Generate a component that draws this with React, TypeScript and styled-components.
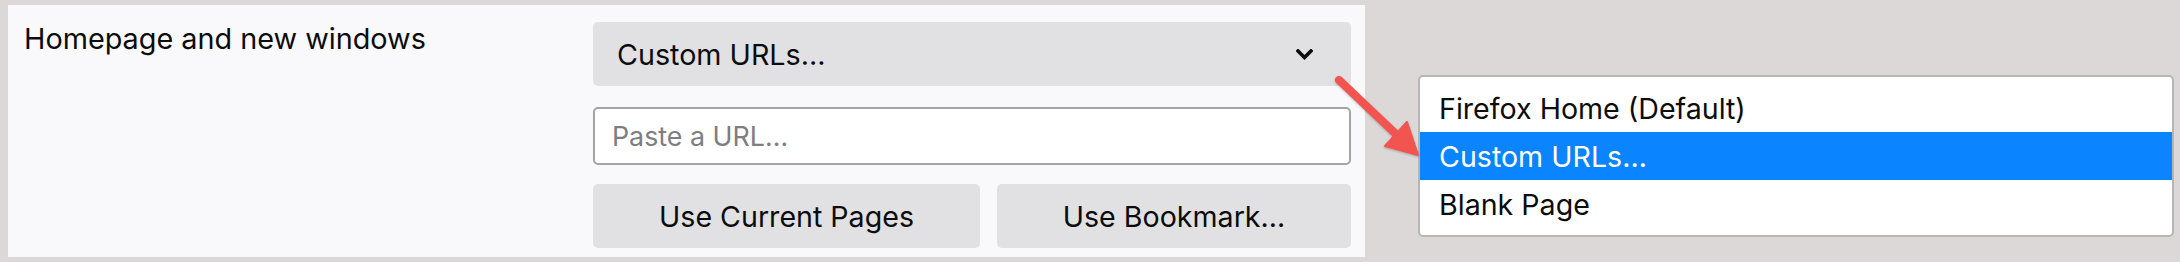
import React from "react";
import styled, { createGlobalStyle } from "styled-components";

const Global = createGlobalStyle`
  html, body { margin: 0; padding: 0; background: #dcd8d8; }
  body { font-family: Inter, "Liberation Sans", sans-serif; -webkit-font-smoothing: antialiased; }
  * { box-sizing: border-box; }
`;

const Stage = styled.div`
  position: relative;
  width: 2180px;
  height: 262px;
  display: flex;
  align-items: flex-start;
  padding: 5px 0 0 8px;
  background: #dcd8d8;
`;

const Panel = styled.section`
  width: 1357px;
  height: 252px;
  background: #f9f9fb;
  display: flex;
  padding: 17px 14px 9px 16px;
`;

const Label = styled.div`
  width: 569px;
  font-size: 28.8px;
  line-height: 36px;
  color: #0c0c0d;
  margin-top: -1px;
`;

const Controls = styled.div`
  width: 758px;
  display: flex;
  flex-direction: column;
`;

const Select = styled.div`
  height: 64px;
  border-radius: 5px;
  background: #e1e1e3;
  display: flex;
  align-items: center;
  justify-content: space-between;
  padding: 0 38px 0 24px;
  font-size: 28.7px;
  color: #0c0c0d;
`;

const UrlInput = styled.input`
  margin-top: 21px;
  height: 58px;
  border: 2px solid #a3a3a8;
  border-radius: 5px;
  background: #fff;
  padding: 0 17px;
  font-family: inherit;
  font-size: 26.8px;
  color: #0c0c0d;
  outline: none;
  &::placeholder { color: #7d7d82; }
`;

const ButtonRow = styled.div`
  margin-top: 19px;
  display: flex;
  gap: 17px;
`;

const Button = styled.button<{ $w: number }>`
  width: ${(p) => p.$w}px;
  height: 64px;
  border: none;
  border-radius: 5px;
  background: #e1e1e3;
  font-family: inherit;
  font-size: 28.6px;
  color: #0c0c0d;
  padding: 0;
`;

const Menu = styled.ul`
  list-style: none;
  margin: 70px 0 0 53px;
  padding: 7px 0;
  width: 756px;
  height: 162px;
  background: #fff;
  border: 2px solid #b6b6b6;
  border-radius: 5px;
`;

const Item = styled.li<{ $active?: boolean }>`
  height: 48px;
  display: flex;
  align-items: center;
  padding-left: 19px;
  font-size: 28.6px;
  color: ${(p) => (p.$active ? "#fff" : "#0c0c0d")};
  background: ${(p) => (p.$active ? "#0a84ff" : "transparent")};
`;

const Arrow = styled.svg`
  position: absolute;
  left: 1330px;
  top: 70px;
  overflow: visible;
  filter: drop-shadow(0 1px 1px rgba(0, 0, 0, 0.25));
`;

const Chevron = () => (
  <svg width="17" height="11" viewBox="0 0 17 11">
    <path d="M2 2 L8.5 8.5 L15 2" fill="none" stroke="#0c0c0d" strokeWidth="3.6" strokeLinecap="square" />
  </svg>
);

export default function App() {
  return (
    <>
      <Global />
      <Stage>
        <Panel>
          <Label>Homepage and new windows</Label>
          <Controls>
            <Select>
              <span>Custom URLs…</span>
              <Chevron />
            </Select>
            <UrlInput placeholder="Paste a URL…" />
            <ButtonRow>
              <Button $w={387}>Use Current Pages</Button>
              <Button $w={354}>Use Bookmark…</Button>
            </ButtonRow>
          </Controls>
        </Panel>
        <Menu>
          <Item>Firefox Home (Default)</Item>
          <Item $active>Custom URLs…</Item>
          <Item>Blank Page</Item>
        </Menu>
        <Arrow width="100" height="100" viewBox="0 0 100 100">
          <line x1="9" y1="10" x2="68" y2="66" stroke="#f2554f" strokeWidth="8" strokeLinecap="round" />
          <polygon points="88,85 77,52 55,76" fill="#f2554f" stroke="#f2554f" strokeWidth="2" strokeLinejoin="round" />
        </Arrow>
      </Stage>
    </>
  );
}
